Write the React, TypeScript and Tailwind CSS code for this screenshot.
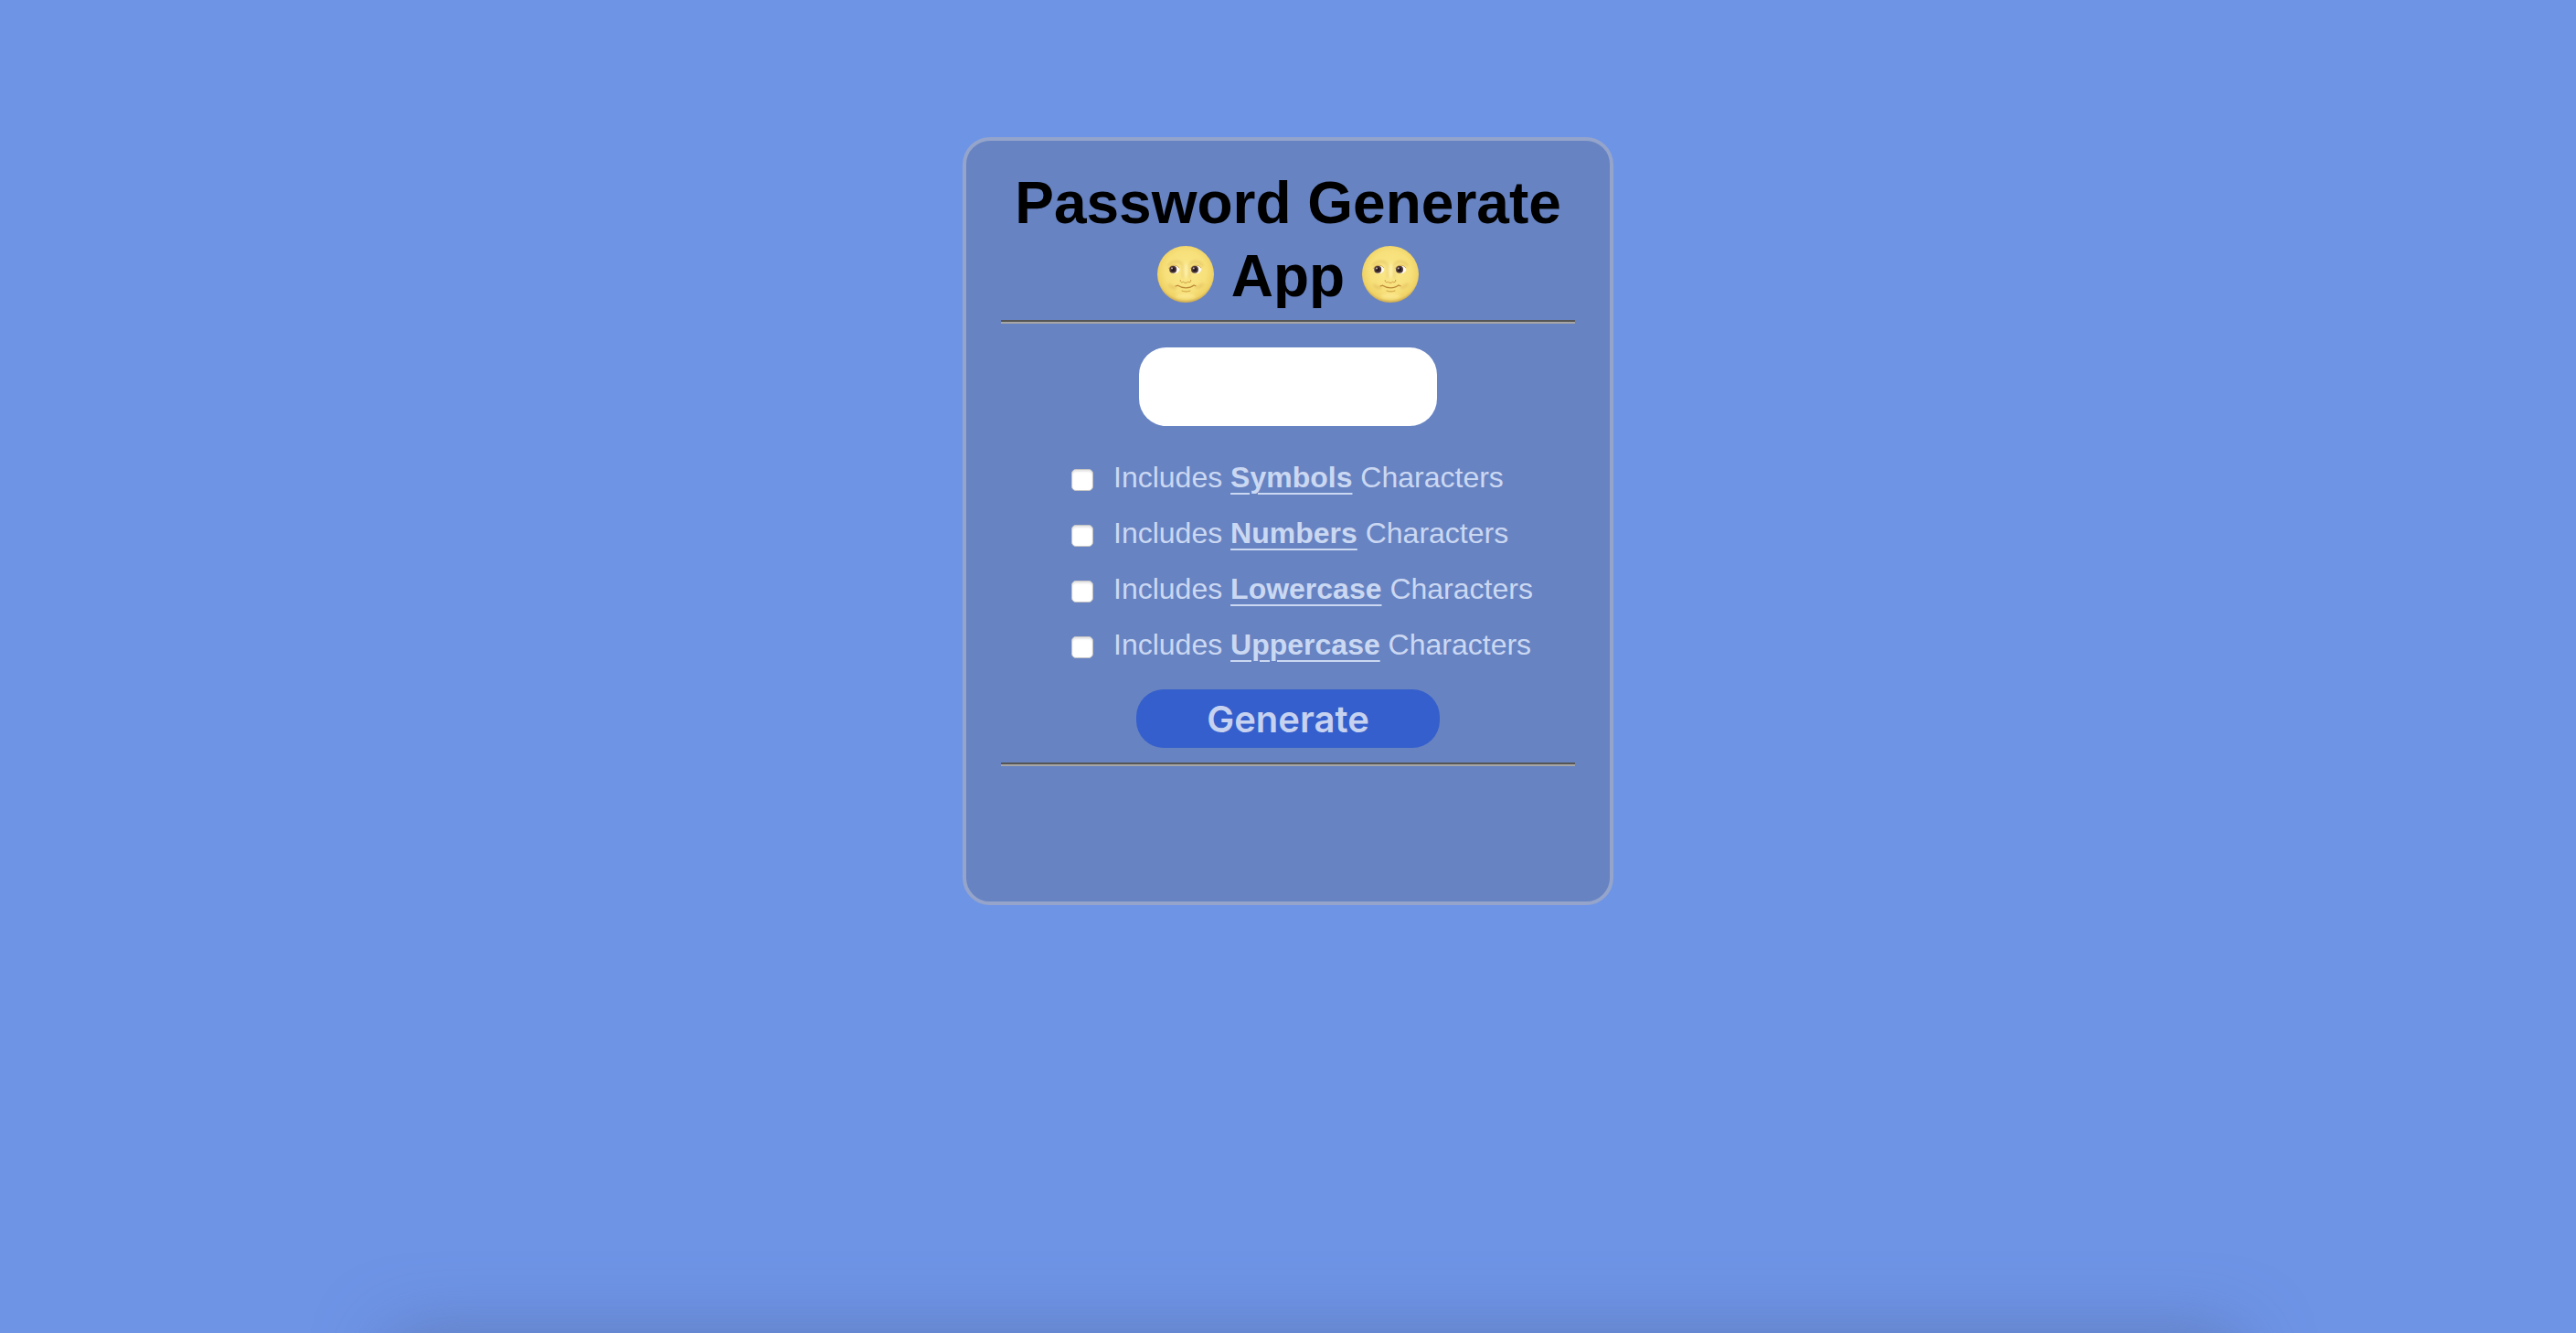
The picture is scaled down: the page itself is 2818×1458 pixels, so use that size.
import { useId, useState } from "react";

function Moon() {
  const id = useId();
  return (
    <svg viewBox="0 0 64 64" className="mb-1 size-16" role="img" aria-label="Full moon face">
      <defs>
        <radialGradient id={id + "face"} cx="0.5" cy="0.45" r="0.56">
          <stop offset="0" stopColor="#fae88c" />
          <stop offset="0.65" stopColor="#f7e07a" />
          <stop offset="0.88" stopColor="#efd265" />
          <stop offset="1" stopColor="#c2a052" />
        </radialGradient>
        <filter id={id + "soft"} x="-50%" y="-50%" width="200%" height="200%">
          <feGaussianBlur stdDeviation="1.4" />
        </filter>
      </defs>
      <circle cx="32" cy="32" r="31" fill={`url(#${id}face)`} />
      <g filter={`url(#${id}soft)`}>
        <path d="M13 23c3-5 11-7 15-2M37 21c4-5 11-3 14 2" stroke="#d3a84c" strokeWidth="2" fill="none" opacity="0.5" />
        <path d="M29 21v15M36 21v15" stroke="#d3a84c" strokeWidth="1.6" fill="none" opacity="0.5" />
        <path d="M14 43c2 3 5 5 8 3M43 46c4 1 6-1 8-4" stroke="#cf9f45" strokeWidth="3" fill="none" opacity="0.4" />
        <ellipse cx="32.5" cy="28" rx="2" ry="8" fill="#fff2ab" />
        <ellipse cx="32" cy="56" rx="11" ry="3" fill="#fff0a0" opacity="0.6" />
      </g>
      <path d="M14 27c2-5.500 9.500-6 11.500 0-2 5.500-9 6-11.500 0zM38 27c2-5.500 9.500-6 11.500 0-2 5.500-9 6-11.500 0z" fill="#fffaf0" />
      <circle cx="18.2" cy="26.8" r="4" fill="#503a39" />
      <circle cx="42" cy="26.8" r="4" fill="#503a39" />
      <circle cx="18.2" cy="26.8" r="2.3" fill="#241820" />
      <circle cx="42" cy="26.8" r="2.3" fill="#241820" />
      <circle cx="17" cy="25.4" r="1" fill="#cbb9b5" />
      <circle cx="40.8" cy="25.4" r="1" fill="#cbb9b5" />
      <path d="M13 26c3-5 9-5 12-1M37 26c3-5 9-5 12-1" stroke="#b98a3c" strokeWidth="0.8" fill="none" opacity="0.7" />
      <path d="M26.500 38c-1 2 1 3.500 3 2.300 1.500 1.500 3.500 1.500 5 0 2 1.200 4-.3 3-2.300" stroke="#cc9c40" strokeWidth="1" fill="none" />
      <path d="M21 45l2.500-.8c5 3.500 13 3.500 17.500-.2l2 .8" stroke="#bb8938" strokeWidth="1.2" fill="none" strokeLinecap="round" />
      <path d="M28 50c3 1.200 6 1.200 9 0" stroke="#d3a84c" strokeWidth="1.1" fill="none" strokeLinecap="round" />
    </svg>
  );
}

function Divider() {
  return <hr className="h-1 border-t-2 border-b-2 border-t-[#555555] border-b-[#a6a6a6]" />;
}

const KINDS = ["Symbols", "Numbers", "Lowercase", "Uppercase"];

export default function App() {
  const [checked, setChecked] = useState<Record<string, boolean>>({});
  return (
    <div className="relative min-h-screen overflow-hidden bg-[#6e94e6] px-4 pt-[150px] font-['Liberation_Sans',Arial,sans-serif]">
      <main className="mx-auto w-full max-w-[712px] rounded-[30px] border-4 border-[#94a4cb] bg-[#6783c2] px-[38px] pt-7 pb-[148px]">
        <h1 className="mb-2 text-center text-[64px] leading-[80px] font-bold text-black">
          Password Generate
          <span className="flex items-center justify-center gap-[18px]">
            <Moon />
            App
            <Moon />
          </span>
        </h1>
        <Divider />
        <form className="mt-[26px] mb-4 flex flex-col items-center" onSubmit={(e) => e.preventDefault()}>
          <input
            type="text"
            aria-label="Password length"
            className="h-[86px] w-[326px] rounded-[30px] bg-white px-6 text-center text-[32px] outline-none"
          />
          <div className="mt-[38px] flex flex-col gap-6 self-start pl-[77px]">
            {KINDS.map((kind) => (
              <label key={kind} className="flex items-center gap-[22px] text-[32px] leading-[37px] text-[#cbd8f2]">
                <input
                  type="checkbox"
                  checked={!!checked[kind]}
                  onChange={(e) => setChecked({ ...checked, [kind]: e.target.checked })}
                  className="mt-1 size-6 appearance-none rounded-[5px] border border-[#c4c4c4] bg-white shadow-[inset_0_2px_2px_#e6e6e6] checked:bg-[#355fcc]"
                />
                <span>
                  Includes <b className="underline decoration-2 underline-offset-[6px]">{kind}</b> Characters
                </span>
              </label>
            ))}
          </div>
          <button
            type="submit"
            className="mt-[30px] h-16 w-[332px] rounded-[30px] bg-[#355fcc] pt-0.5 font-[Inter,sans-serif] text-[40px] leading-[48px] font-semibold text-[#c6d2ef]"
          >
            Generate
          </button>
        </form>
        <Divider />
      </main>
      <div
        aria-hidden="true"
        className="absolute right-[13%] left-[15%] top-full h-20 rounded-[30px] shadow-[0_0_76px_0_rgba(86,106,160,0.6)]"
      />
    </div>
  );
}
